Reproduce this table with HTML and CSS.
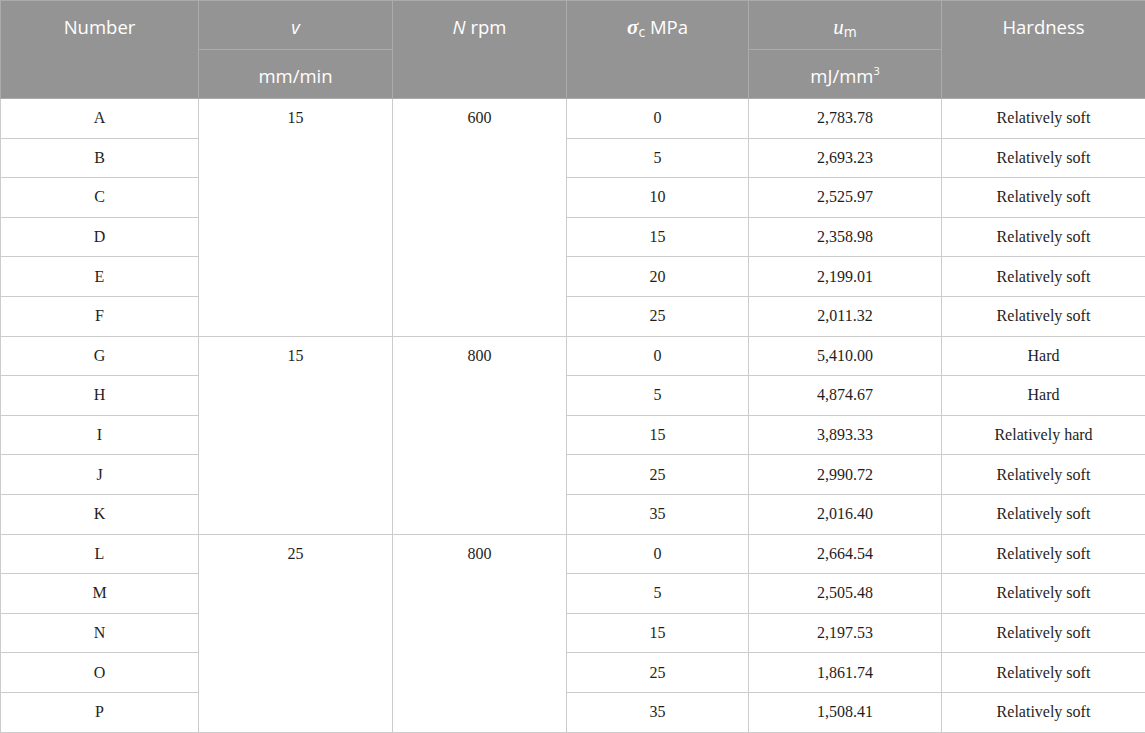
FILE: index.html
```html
<!DOCTYPE html>
<html>
<head>
<meta charset="utf-8">
<link rel="stylesheet" href="styles.css">
</head>
<body>
<table class="data">
  <colgroup>
    <col class="c1"><col class="c2"><col class="c3"><col class="c4"><col class="c5"><col class="c6">
  </colgroup>
  <thead>
    <tr class="h1">
      <th rowspan="2" class="top">Number</th>
      <th><i>v</i></th>
      <th rowspan="2" class="top"><i>N</i> rpm</th>
      <th rowspan="2" class="top"><b class="sig">σ</b><sub>c</sub> MPa</th>
      <th><i class="u">u</i><sub>m</sub></th>
      <th rowspan="2" class="top">Hardness</th>
    </tr>
    <tr class="h2">
      <th>mm/min</th>
      <th>mJ/mm<sup>3</sup></th>
    </tr>
  </thead>
  <tbody>
    <tr><td>A</td><td rowspan="6" class="top">15</td><td rowspan="6" class="top">600</td><td>0</td><td>2,783.78</td><td>Relatively soft</td></tr>
    <tr><td>B</td><td>5</td><td>2,693.23</td><td>Relatively soft</td></tr>
    <tr><td>C</td><td>10</td><td>2,525.97</td><td>Relatively soft</td></tr>
    <tr><td>D</td><td>15</td><td>2,358.98</td><td>Relatively soft</td></tr>
    <tr><td>E</td><td>20</td><td>2,199.01</td><td>Relatively soft</td></tr>
    <tr><td>F</td><td>25</td><td>2,011.32</td><td>Relatively soft</td></tr>
    <tr><td>G</td><td rowspan="5" class="top">15</td><td rowspan="5" class="top">800</td><td>0</td><td>5,410.00</td><td>Hard</td></tr>
    <tr><td>H</td><td>5</td><td>4,874.67</td><td>Hard</td></tr>
    <tr><td>I</td><td>15</td><td>3,893.33</td><td>Relatively hard</td></tr>
    <tr><td>J</td><td>25</td><td>2,990.72</td><td>Relatively soft</td></tr>
    <tr><td>K</td><td>35</td><td>2,016.40</td><td>Relatively soft</td></tr>
    <tr><td>L</td><td rowspan="5" class="top">25</td><td rowspan="5" class="top">800</td><td>0</td><td>2,664.54</td><td>Relatively soft</td></tr>
    <tr><td>M</td><td>5</td><td>2,505.48</td><td>Relatively soft</td></tr>
    <tr><td>N</td><td>15</td><td>2,197.53</td><td>Relatively soft</td></tr>
    <tr><td>O</td><td>25</td><td>1,861.74</td><td>Relatively soft</td></tr>
    <tr><td>P</td><td>35</td><td>1,508.41</td><td>Relatively soft</td></tr>
  </tbody>
</table>
</body>
</html>
```
FILE: styles.css
```css
html, body {
  margin: 0;
  padding: 0;
  background: #ffffff;
}
.data {
  width: 1145px;
  border-collapse: collapse;
  table-layout: fixed;
}
.c1 { width: 198px; }
.c2 { width: 194px; }
.c3 { width: 174px; }
.c4 { width: 182px; }
.c5 { width: 193px; }
.c6 { width: 204px; }

.data th {
  background: #949494;
  color: #ffffff;
  font-family: "Open Sans", "Liberation Sans", sans-serif;
  font-weight: normal;
  font-size: 18.5px;
  line-height: 24px;
  text-align: center;
  vertical-align: middle;
  border: 1px solid #ababab;
  padding: 3px 4px 0;
  height: 45px;
}
.data th.top {
  vertical-align: top;
  padding-top: 14px;
}
.data th i { font-style: italic; }
.data th .u {
  font-family: "Liberation Serif", serif;
  font-size: 21px;
}
.data th .sig {
  font-family: "Liberation Serif", serif;
  font-style: italic;
  font-weight: bold;
  font-size: 21px;
}
.data th sub {
  font-size: 14px;
  vertical-align: -3px;
  line-height: 0;
}
.data th sup {
  font-size: 11px;
  vertical-align: 8px;
  line-height: 0;
}

.data td {
  font-family: "Liberation Serif", "Times New Roman", serif;
  font-size: 16px;
  color: #1e1e1e;
  line-height: 20px;
  text-align: center;
  vertical-align: middle;
  border: 1px solid #cccccc;
  padding: 0 4px;
  height: 38.6px;
}
.data td.top {
  vertical-align: top;
  padding-top: 9px;
}
```
